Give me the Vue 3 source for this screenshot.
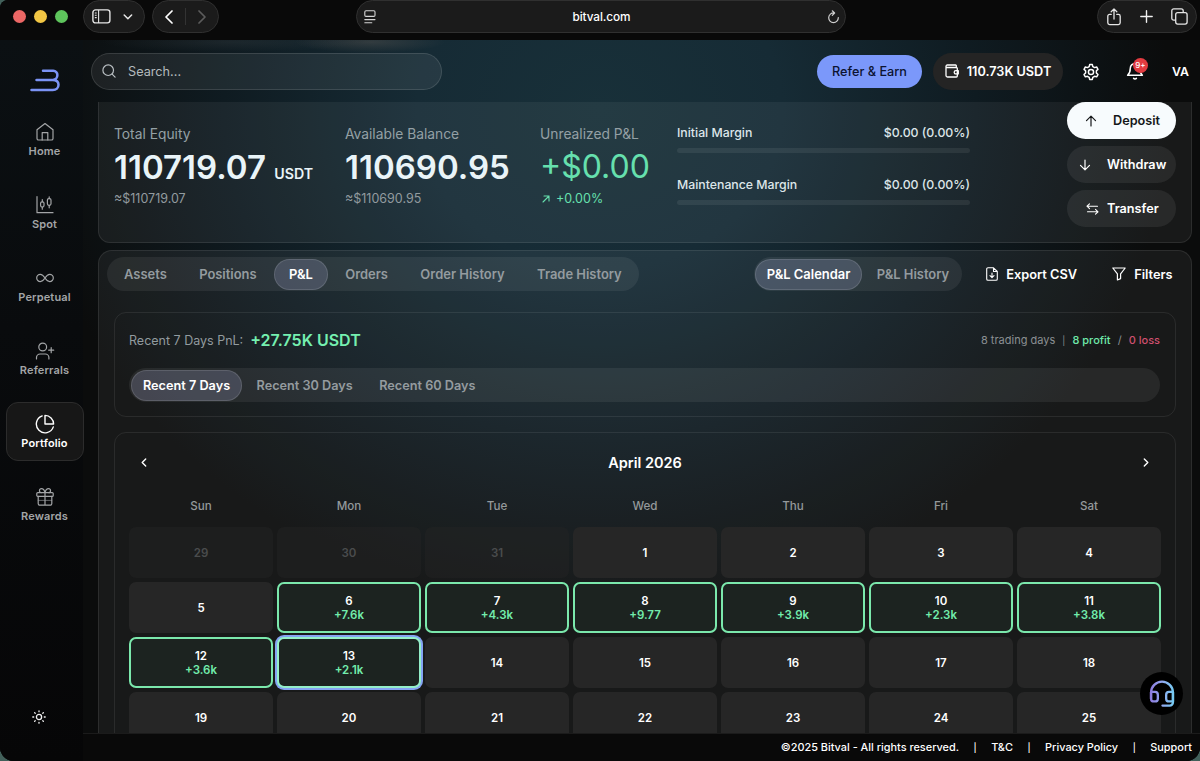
<script setup>
import { ref, computed } from 'vue'

const navItems = [
  { key: 'home', label: 'Home' },
  { key: 'spot', label: 'Spot' },
  { key: 'perpetual', label: 'Perpetual' },
  { key: 'referrals', label: 'Referrals' },
  { key: 'portfolio', label: 'Portfolio' },
  { key: 'rewards', label: 'Rewards' }
]
const activeNav = ref('portfolio')

const tabs = ['Assets', 'Positions', 'P&L', 'Orders', 'Order History', 'Trade History']
const activeTab = ref('P&L')

const views = ['P&L Calendar', 'P&L History']
const activeView = ref('P&L Calendar')

const ranges = ['Recent 7 Days', 'Recent 30 Days', 'Recent 60 Days']
const activeRange = ref('Recent 7 Days')

const weekdays = ['Sun', 'Mon', 'Tue', 'Wed', 'Thu', 'Fri', 'Sat']
const pnl = {
  6: '+7.6k',
  7: '+4.3k',
  8: '+9.77',
  9: '+3.9k',
  10: '+2.3k',
  11: '+3.8k',
  12: '+3.6k',
  13: '+2.1k'
}
const today = 13
const lastDay = 25

const days = computed(() => {
  const list = [29, 30, 31].map(n => ({ id: 'p' + n, n, muted: true }))
  for (let n = 1; n <= lastDay; n++) {
    list.push({ id: 'd' + n, n, pnl: pnl[n], today: n === today })
  }
  return list
})

const footerLinks = ['T&C', 'Privacy Policy', 'Support']
</script>

<template>
  <div class="window">
    <header class="chrome">
      <div class="lights">
        <i class="red"></i><i class="yellow"></i><i class="green"></i>
      </div>
      <div class="chrome-pill side-pill">
        <svg width="19" height="15" viewBox="0 0 19 15" fill="none" stroke="#e6e6e6" stroke-width="1.4">
          <rect x="0.9" y="0.9" width="17" height="13" rx="2.6" />
          <path d="M6.6 1v13M2.8 4h1.9M2.8 6.3h1.9M2.8 8.6h1.9" stroke-width="1.1" />
        </svg>
        <svg width="10" height="6" viewBox="0 0 10 6" fill="none" stroke="#e6e6e6" stroke-width="1.5" stroke-linecap="round" stroke-linejoin="round"><path d="M1.2 1l3.7 3.7L8.6 1" /></svg>
      </div>
      <div class="chrome-pill nav-pill">
        <svg width="8" height="14" viewBox="0 0 8 14" fill="none" stroke="#fff" stroke-width="1.7" stroke-linecap="round" stroke-linejoin="round"><path d="M7 1L1 7l6 6" /></svg>
        <span class="nav-sep"></span>
        <svg width="8" height="14" viewBox="0 0 8 14" fill="none" stroke="#5c5c5c" stroke-width="1.7" stroke-linecap="round" stroke-linejoin="round"><path d="M1 1l6 6-6 6" /></svg>
      </div>
      <div class="chrome-pill url-pill">
        <svg width="12" height="14" viewBox="0 0 12 14" fill="none" stroke="#d6d6d6" stroke-width="1.1" stroke-linecap="round"><rect x="0.8" y="0.8" width="10.2" height="5.6" rx="1.2" /><path d="M.8 9.6h10.2M.8 12.7h7" /></svg>
        <span class="url">bitval.com</span>
        <svg width="13" height="14" viewBox="0 0 13 14" fill="none" stroke="#cfcfcf" stroke-width="1.2" stroke-linecap="round" stroke-linejoin="round"><path d="M7 3a4.8 4.8 0 1 0 4.3 4.6M5.3.8L7.6 3 5.3 5.3" /></svg>
      </div>
      <div class="chrome-pill action-pill">
        <svg width="14" height="18" viewBox="0 0 14 18" fill="none" stroke="#e6e6e6" stroke-width="1.3" stroke-linecap="round" stroke-linejoin="round"><path d="M4.2 6.4H2.6A1.8 1.8 0 0 0 .8 8.2v6.6a1.8 1.8 0 0 0 1.8 1.8h8.800a1.800 1.800 0 0 0 1.800-1.800V8.200a1.800 1.800 0 0 0-1.800-1.800H9.800M7 11V1M4.200 3.700L7 .9l2.800 2.800" /></svg>
        <svg width="13" height="13" viewBox="0 0 13 13" stroke="#f0f0f0" stroke-width="1.4" stroke-linecap="round"><path d="M6.500.8v11.400M.8 6.500h11.400" /></svg>
        <svg width="17" height="17" viewBox="0 0 17 17" fill="none" stroke="#e6e6e6" stroke-width="1.3"><rect x="4.7" y="4.7" width="11.4" height="11.4" rx="2" /><path d="M4.700 12.200H2.800a2 2 0 0 1-2-2V2.800a2 2 0 0 1 2-2h7.400a2 2 0 0 1 2 2v1.900" /></svg>
      </div>
    </header>

    <div class="app">
      <aside class="sidebar">
        <svg class="logo" width="30" height="23" viewBox="0 0 30 23" fill="none" stroke="#7b93f5" stroke-width="2.5" stroke-linecap="round" stroke-linejoin="round">
          <path d="M13 1.800h10.300a4.100 4.100 0 0 1 4.100 4.300c0 2.900-2 4.800-4.600 4.800H6.500M22.800 10.900c3.400 0 5.700 1.800 5.700 4.900 0 3.200-2.300 5.200-5.700 5.200H1.500" />
        </svg>
        <nav class="nav">
          <button
            v-for="item in navItems"
            :key="item.key"
            type="button"
            class="nav-item"
            :class="{ active: activeNav === item.key }"
            @click="activeNav = item.key"
          >
            <svg width="20" height="20" viewBox="0 0 20 20" fill="none" stroke="currentColor" stroke-width="1.2" stroke-linecap="round" stroke-linejoin="round">
              <template v-if="item.key === 'home'">
                <path d="M2 7.800L10 1.500l8 6.300v8.600a1.600 1.600 0 0 1-1.600 1.600H3.600A1.600 1.600 0 0 1 2 16.400z" />
                <path d="M7.200 18v-7.400h5.600V18" />
              </template>
              <template v-else-if="item.key === 'spot'">
                <path d="M2 1.500V17.700h16M7.300 4.600v2.100M7.300 12.200v2M14.200 1.800v1.700M14.200 10.400v2.400" />
                <rect x="5.6" y="6.8" width="3.4" height="5.3" rx="1.5" />
                <rect x="12.4" y="3.6" width="3.6" height="6.7" rx="1.5" />
              </template>
              <path v-else-if="item.key === 'perpetual'" d="M10 10C8.500 7.800 7.300 6.400 5.300 6.400a3.600 3.600 0 0 0 0 7.200c2 0 3.200-1.400 4.700-3.600s2.700-3.600 4.700-3.600a3.600 3.600 0 0 1 0 7.200c-2 0-3.200-1.400-4.700-3.600z" />
              <template v-else-if="item.key === 'referrals'">
                <circle cx="7.7" cy="6" r="3.9" />
                <path d="M1.500 18v-1.400a3.600 3.600 0 0 1 3.600-3.600h5.200a3.600 3.600 0 0 1 3.600 3.600V18M16.200 6.700v5M13.700 9.200h5" />
              </template>
              <template v-else-if="item.key === 'portfolio'">
                <path d="M18.300 12.900A8.700 8.700 0 1 1 7.200 1.900" stroke-width="1.4" />
                <path d="M18.600 10A8.600 8.600 0 0 0 10 1.400V10z" stroke-width="1.4" />
              </template>
              <template v-else>
                <rect x="1.8" y="5.6" width="16.4" height="3.8" rx="1" />
                <path d="M3.200 9.400v7.200A1.600 1.600 0 0 0 4.800 18.200h10.400a1.600 1.600 0 0 0 1.600-1.600V9.400M10 5.600v12.600M10 5.600S9 1.700 6.400 1.700a1.950 1.950 0 0 0 0 3.900M10 5.600s1-3.900 3.600-3.900a1.950 1.950 0 0 1 0 3.900" />
                <path d="M3.200 13.400h13.600" stroke-width="0.6" />
              </template>
            </svg>
            <span>{{ item.label }}</span>
          </button>
        </nav>
        <svg class="theme" width="14" height="14" viewBox="0 0 14 14" fill="none" stroke="#f2f2f2" stroke-width="1.3" stroke-linecap="round">
          <circle cx="7" cy="7" r="2.6" />
          <path d="M7 .8v.9M7 12.300v.9M.8 7h.9M12.300 7h.9M2.600 2.600l.6.6M10.800 10.800l.6.6M2.600 11.400l.6-.6M10.800 3.200l.6-.6" />
        </svg>
      </aside>

      <div class="page">
        <div class="topbar">
          <div class="search">
            <svg width="14" height="14" viewBox="0 0 14 14" fill="none" stroke="#b8bec2" stroke-width="1.2" stroke-linecap="round"><circle cx="6.2" cy="6.2" r="5.3" /><path d="M10.100 10.100l3 3" /></svg>
            <span>Search...</span>
          </div>
          <button type="button" class="refer">Refer &amp; Earn</button>
          <button type="button" class="wallet">
            <svg width="14" height="14" viewBox="0 0 14 14" fill="none" stroke="#fff" stroke-width="1.3" stroke-linejoin="round"><path d="M11.300 3.500V1.700a.7.700 0 0 0-.7-.7H2.300A1.300 1.300 0 0 0 1 2.300v9.200A1.500 1.500 0 0 0 2.500 13h8.800a1 1 0 0 0 1-1V4.500a1 1 0 0 0-1-1h-9A1.200 1.200 0 0 1 1 2.300M13.300 6.700h-2.500a1.600 1.600 0 0 0 0 3.200h2.500z" /></svg>
            110.73K USDT
          </button>
          <svg class="gear" width="18" height="18" viewBox="0.5 -0.5 23 23" fill="none" stroke="#fff" stroke-width="1.9" stroke-linejoin="round">
            <path d="M9.700 4.100L10.300 1.500h3.400l.6 2.600 2.300 1.300 2.600-.8 1.700 3-2 1.900v2.800l2 2-1.700 2.900-2.600-.7-2.300 1.300-.6 2.700h-3.400l-.6-2.700-2.300-1.300-2.600.7-1.700-2.900 2-2V9.500l-2-1.900 1.700-3 2.600.8z" />
            <circle cx="12" cy="11" r="3.3" />
          </svg>
          <div class="bell">
            <svg width="18" height="18" viewBox="0 0 18 18" fill="none" stroke="#fff" stroke-width="1.5" stroke-linecap="round" stroke-linejoin="round"><path d="M9 1.500a4.700 4.700 0 0 0-4.700 4.700c0 4.500-1.300 5.700-2.700 7h14.800c-1.400-1.300-2.700-2.500-2.700-7A4.700 4.700 0 0 0 9 1.500zM7.600 16.300a1.700 1.700 0 0 0 2.800 0" /></svg>
            <span class="badge">9+</span>
          </div>
          <span class="user">VA</span>
        </div>

        <main class="content">
          <section class="panel summary">
            <div class="stat equity">
              <span class="stat-label">Total Equity</span>
              <div class="stat-value">110719.07 <small>USDT</small></div>
              <span class="stat-sub">≈$110719.07</span>
            </div>
            <div class="stat balance">
              <span class="stat-label">Available Balance</span>
              <div class="stat-value">110690.95</div>
              <span class="stat-sub">≈$110690.95</span>
            </div>
            <div class="stat unrealized">
              <span class="stat-label">Unrealized P&amp;L</span>
              <div class="stat-value gain">+$0.00</div>
              <span class="stat-sub gain">
                <svg width="8" height="8" viewBox="0 0 8 8" fill="none" stroke="currentColor" stroke-width="1.1" stroke-linecap="round" stroke-linejoin="round"><path d="M1 7l6-6M2 1h5v5" /></svg>
                +0.00%
              </span>
            </div>
            <div class="margins">
              <div class="margin">
                <div class="margin-row"><span>Initial Margin</span><span>$0.00 (0.00%)</span></div>
                <div class="track"></div>
              </div>
              <div class="margin">
                <div class="margin-row"><span>Maintenance Margin</span><span>$0.00 (0.00%)</span></div>
                <div class="track"></div>
              </div>
            </div>
            <div class="actions">
              <button type="button" class="action primary">
                <svg width="12" height="12" viewBox="0 0 12 12" fill="none" stroke="currentColor" stroke-width="1.2" stroke-linecap="round" stroke-linejoin="round"><path d="M6 11V1.300M1.500 5.700L6 1.200l4.500 4.500" /></svg>
                <span>Deposit</span>
              </button>
              <button type="button" class="action withdraw">
                <svg width="12" height="12" viewBox="0 0 12 12" fill="none" stroke="currentColor" stroke-width="1.2" stroke-linecap="round" stroke-linejoin="round"><path d="M6 1v9.700M1.500 6.300L6 10.800l4.500-4.500" /></svg>
                <span>Withdraw</span>
              </button>
              <button type="button" class="action transfer">
                <svg width="13" height="12" viewBox="0 0 13 12" fill="none" stroke="currentColor" stroke-width="1.1" stroke-linecap="round" stroke-linejoin="round"><path d="M11.500 3.200H1M3.500.8L1 3.200l2.500 2.400M1.500 8.800H12M9.500 6.400L12 8.800l-2.500 2.400" /></svg>
                <span>Transfer</span>
              </button>
            </div>
          </section>

          <section class="panel detail">
            <div class="toolbar">
              <div class="tabs">
                <button
                  v-for="tab in tabs"
                  :key="tab"
                  type="button"
                  class="tab"
                  :class="{ active: activeTab === tab }"
                  @click="activeTab = tab"
                >{{ tab }}</button>
              </div>
              <div class="tabs views">
                <button
                  v-for="view in views"
                  :key="view"
                  type="button"
                  class="tab"
                  :class="{ active: activeView === view }"
                  @click="activeView = view"
                >{{ view }}</button>
              </div>
              <button type="button" class="tool">
                <svg width="12" height="14" viewBox="0 0 12 14" fill="none" stroke="#fff" stroke-width="1.1" stroke-linecap="round" stroke-linejoin="round"><path d="M7.500.8H2A1.300 1.300 0 0 0 .7 2.100v9.800A1.300 1.300 0 0 0 2 13.200h8a1.300 1.300 0 0 0 1.300-1.300V4.500zM7.500.8v3.700h3.800M6 6v4.500M4 8.700l2 1.900 2-1.900" /></svg>
                Export CSV
              </button>
              <button type="button" class="tool filters">
                <svg width="14" height="14" viewBox="0 0 14 14" fill="none" stroke="#fff" stroke-width="1.2" stroke-linejoin="round"><path d="M.8 1h12.400L8.600 6.800v4.800L5.400 13V6.800z" /></svg>
                Filters
              </button>
            </div>

            <div class="card recent">
              <div class="recent-head">
                <span class="recent-label">Recent 7 Days PnL:</span>
                <strong>+27.75K USDT</strong>
                <span class="recent-stats">8 trading days <i class="bar">|</i> <b class="profit">8 profit</b> <i>/</i> <b class="loss">0 loss</b></span>
              </div>
              <div class="tabs ranges">
                <button
                  v-for="range in ranges"
                  :key="range"
                  type="button"
                  class="tab"
                  :class="{ active: activeRange === range }"
                  @click="activeRange = range"
                >{{ range }}</button>
              </div>
            </div>

            <div class="card calendar">
              <div class="month">
                <svg width="6" height="9" viewBox="0 0 6 9" fill="none" stroke="#fff" stroke-width="1.4" stroke-linecap="round" stroke-linejoin="round"><path d="M4.700 1L1.200 4.500 4.700 8" /></svg>
                <h3>April 2026</h3>
                <svg width="6" height="9" viewBox="0 0 6 9" fill="none" stroke="#fff" stroke-width="1.4" stroke-linecap="round" stroke-linejoin="round"><path d="M1.300 1l3.500 3.500L1.300 8" /></svg>
              </div>
              <div class="grid weekdays">
                <span v-for="day in weekdays" :key="day">{{ day }}</span>
              </div>
              <div class="grid">
                <div
                  v-for="day in days"
                  :key="day.id"
                  class="day"
                  :class="{ muted: day.muted, win: day.pnl, today: day.today }"
                >
                  <span>{{ day.n }}</span>
                  <span v-if="day.pnl" class="day-pnl">{{ day.pnl }}</span>
                </div>
              </div>
            </div>
          </section>
        </main>

        <footer class="footer">
          <span>©2025 Bitval - All rights reserved.</span>
          <template v-for="link in footerLinks" :key="link">
            <i class="bar">|</i>
            <span>{{ link }}</span>
          </template>
        </footer>
      </div>
    </div>

    <button type="button" class="support" aria-label="Support">
      <svg width="26" height="28" viewBox="0 0 28 30" fill="none" stroke="url(#support-stroke)" stroke-width="2.5" stroke-linecap="round" stroke-linejoin="round">
        <defs>
          <linearGradient id="support-stroke" gradientUnits="userSpaceOnUse" x1="1" y1="0" x2="27" y2="0">
            <stop offset="0" stop-color="#8c78dc" />
            <stop offset="0.5" stop-color="#93a8f0" />
            <stop offset="1" stop-color="#74ccf2" />
          </linearGradient>
        </defs>
        <path d="M2.200 20v-6.500a11.800 11.800 0 0 1 23.600 0V24a3.500 3.500 0 0 1-3.500 3.500H14.500" />
        <path d="M2.200 12.800H6.500a3 3 0 0 1 3 3v4.200a3 3 0 0 1-3 3H5.200a3 3 0 0 1-3-3zM25.800 12.800H21.500a3 3 0 0 0-3 3v4.200a3 3 0 0 0 3 3h4.300z" />
      </svg>
    </button>
  </div>
</template>

<style>
html,
body {
  background: #42605a;
  overflow: hidden;
}
</style>

<style scoped>
.window {
  position: relative;
  display: flex;
  flex-direction: column;
  width: 1200px;
  height: 761px;
  overflow: hidden;
  border-radius: 8px 0 14px 14px;
  background: #0a0a0a;
  color: #fff;
  font-family: Inter, 'Noto Sans', sans-serif;
}

button {
  border: 0;
  padding: 0;
  margin: 0;
  background: none;
  color: inherit;
  font: inherit;
  white-space: nowrap;
}

svg {
  flex: none;
}

i {
  font-style: normal;
}

/* browser bar */
.chrome {
  display: flex;
  flex: none;
  height: 40px;
  background: #090909;
}

.lights {
  display: flex;
  gap: 8px;
  width: 83px;
  padding: 10px 0 0 13px;
  box-sizing: border-box;
}

.lights i {
  width: 13px;
  height: 13px;
  border-radius: 50%;
}

.red { background: #ec6765; }
.yellow { background: #f2c644; }
.green { background: #5ec45c; }

.chrome-pill {
  display: flex;
  align-items: center;
  box-sizing: border-box;
  height: 33px;
  border: 1px solid #303030;
  border-radius: 17px;
  background: #1b1b1b;
}

.side-pill {
  width: 62px;
  padding: 0 11px 0 8px;
  justify-content: space-between;
}

.nav-pill {
  width: 67px;
  margin-left: 7px;
  padding: 0 12px;
  justify-content: space-between;
}

.nav-sep {
  width: 1px;
  height: 17px;
  background: #333;
}

.url-pill {
  width: 490px;
  margin-left: 137px;
  padding: 0 5px 0 7px;
}

.url {
  flex: 1;
  text-align: center;
  font-size: 11.8px;
  font-weight: 500;
  letter-spacing: -0.1px;
}

.action-pill {
  width: 100px;
  margin-left: 251px;
  padding: 0 8px 0 9px;
  justify-content: space-between;
}

/* shell */
.app {
  display: flex;
  height: 721px;
  background:
    radial-gradient(ellipse 75px 11px at 370px 2px, rgba(130, 115, 105, 0.28), transparent),
    radial-gradient(ellipse 130px 10px at 230px 2px, rgba(110, 110, 110, 0.14), transparent),
    radial-gradient(ellipse 570px 500px at 600px 70px, #183039 0%, #162b35 32%, #0f1b21 66%, #0b0c0c 100%);
}

.sidebar {
  display: flex;
  flex-direction: column;
  align-items: center;
  flex: none;
  box-sizing: border-box;
  width: 83px;
  padding: 29px 0 0 6px;
  background: linear-gradient(#0b1013 0%, #090b0d 40%, #060607 100%);
}

.logo {
  margin-left: 1px;
}

.nav {
  display: flex;
  flex-direction: column;
  gap: 14px;
  margin-top: 18px;
}

.nav-item {
  display: flex;
  flex-direction: column;
  align-items: center;
  gap: 2px;
  box-sizing: border-box;
  width: 78px;
  height: 59px;
  padding-top: 11px;
  border: 1px solid transparent;
  border-radius: 12px;
  color: #a3a5a7;
  font-size: 11px;
  font-weight: 600;
  line-height: 14px;
  letter-spacing: 0.15px;
}

.nav-item.active {
  border-color: #2c2c2c;
  background: #171717;
  color: #fff;
}

.theme {
  margin: auto 11px 37px 0;
}

.page {
  display: flex;
  flex-direction: column;
  width: 1117px;
}

.topbar {
  display: flex;
  align-items: center;
  flex: none;
  height: 62px;
  padding-left: 8px;
}

.search {
  display: flex;
  align-items: center;
  gap: 12px;
  box-sizing: border-box;
  width: 351px;
  height: 37px;
  padding-left: 10px;
  border: 1px solid rgba(255, 255, 255, 0.12);
  border-radius: 19px;
  background: rgba(255, 255, 255, 0.07);
  color: #b4babd;
  font-size: 12.7px;
}

.refer {
  width: 105px;
  height: 33px;
  margin-left: 375px;
  border-radius: 17px;
  background: #7b98fa;
  color: #0c1330;
  font-size: 12.7px;
  font-weight: 500;
}

.wallet {
  display: flex;
  align-items: center;
  justify-content: center;
  gap: 8px;
  width: 130px;
  height: 37px;
  margin-left: 11px;
  border-radius: 19px;
  background: #242424;
  font-size: 12.7px;
  font-weight: 600;
}

.gear {
  margin: 2px 0 0 19px;
}

.bell {
  position: relative;
  height: 18px;
  margin-left: 26px;
}

.badge {
  position: absolute;
  top: -4px;
  left: 7px;
  width: 15px;
  height: 15px;
  border-radius: 50%;
  background: #e23b40;
  font-size: 8px;
  font-weight: 500;
  line-height: 15px;
  text-align: center;
}

.user {
  margin-left: 28px;
  font-size: 12.3px;
  font-weight: 600;
}

.content {
  height: 631px;
  padding: 0 8px 0 15px;
  overflow: hidden;
}

.panel {
  box-sizing: border-box;
  border: 1px solid rgba(255, 255, 255, 0.09);
  background: rgba(255, 255, 255, 0.055);
}

.summary {
  display: flex;
  height: 141px;
  padding: 0 15px;
  border-top: 0;
  border-radius: 0 0 12px 12px;
}

.stat {
  display: flex;
  flex-direction: column;
  flex: none;
  padding-top: 23px;
}

.equity { width: 231px; }
.balance { width: 195px; }
.unrealized { width: 137px; }

.stat-label {
  color: #94a0a5;
  font-size: 13.8px;
  line-height: 18px;
}

.stat-value {
  height: 40px;
  margin-top: 4px;
  color: #e9f4f8;
  font-size: 33px;
  font-weight: 600;
  line-height: 40px;
  white-space: nowrap;
}

.stat-value small {
  font-size: 14.2px;
  font-weight: 600;
}

.stat-sub {
  margin-top: 3px;
  color: #929b9f;
  font-size: 12.5px;
  line-height: 18px;
}

.stat-value.gain {
  color: #66e0ae;
  font-size: 32px;
  font-weight: 400;
}

.stat-sub.gain {
  display: flex;
  align-items: center;
  gap: 6px;
  padding-left: 2px;
  color: #66e0ae;
}

.margins {
  display: flex;
  flex-direction: column;
  gap: 26px;
  width: 293px;
  padding-top: 22px;
}

.margin-row {
  display: flex;
  justify-content: space-between;
  height: 18px;
  color: #dde6e9;
  font-size: 12.3px;
  font-weight: 500;
  line-height: 18px;
}

.track {
  height: 5px;
  margin-top: 6px;
  border-radius: 3px;
  background: rgba(255, 255, 255, 0.07);
}

.margins .margin {
  height: 26px;
}

.actions {
  display: flex;
  flex-direction: column;
  gap: 7px;
  width: 109px;
  margin-left: auto;
}

.action {
  display: flex;
  align-items: center;
  flex: none;
  box-sizing: border-box;
  height: 37px;
  padding-left: 18px;
  border-radius: 19px;
  background: rgba(255, 255, 255, 0.07);
  font-size: 12.7px;
  font-weight: 600;
}

.action.primary {
  gap: 16px;
  background: #f7fbfd;
  color: #151719;
}

.action.withdraw {
  gap: 16px;
  padding-left: 12px;
}

.action.transfer {
  gap: 8px;
  padding-left: 19px;
}

/* P&L details */
.detail {
  height: 560px;
  margin-top: 7px;
  padding: 6px 15px 0;
  border-radius: 14px 14px 0 0;
}

.toolbar {
  display: flex;
  align-items: center;
  margin: 0 -6px 21px -7px;
}

.tabs {
  display: flex;
  align-items: center;
  gap: 2.4px;
  box-sizing: border-box;
  height: 34px;
  padding: 0 2px;
  border-radius: 17px;
  background: rgba(255, 255, 255, 0.065);
}

.tab {
  box-sizing: border-box;
  height: 31px;
  padding: 0 14px;
  border: 1px solid transparent;
  border-radius: 16px;
  color: #949b9f;
  font-size: 12.95px;
  font-weight: 600;
}

.tab.active {
  border-color: rgba(255, 255, 255, 0.13);
  background: rgba(148, 153, 188, 0.27);
  color: #fff;
}

.views {
  margin-left: 115px;
  padding: 0 1px;
}

.views .tab {
  padding: 0 11px;
}

.tool {
  display: flex;
  align-items: center;
  gap: 8px;
  margin-left: 24px;
  font-size: 12.8px;
  font-weight: 600;
}

.tool.filters {
  margin-left: 35px;
}

.card {
  box-sizing: border-box;
  border: 1px solid rgba(255, 255, 255, 0.08);
  border-radius: 12px;
}

.recent {
  height: 105px;
  padding: 16px 15px 0 14px;
}

.recent-head {
  display: flex;
  align-items: center;
  height: 22px;
}

.recent-label {
  color: #929b9f;
  font-size: 12.5px;
}

.recent-head strong {
  margin-left: 7px;
  color: #75f0b0;
  font-size: 16px;
  font-weight: 600;
}

.recent-stats {
  margin-left: auto;
  color: #8b9093;
  font-size: 11px;
}

.recent-stats i {
  margin: 0 4px;
}

.bar {
  font-size: 9px;
}

.recent-stats b {
  font-weight: 500;
}

.profit { color: #6fe9aa; }
.loss { color: #d0506f; }

.ranges {
  margin-top: 17px;
}

.ranges .tab {
  padding: 0 11px;
  font-size: 12.7px;
}

.calendar {
  height: 400px;
  margin-top: 15px;
  padding: 14px 14px 0;
}

.month {
  display: flex;
  align-items: center;
  justify-content: space-between;
  height: 30px;
  padding: 0 12px;
}

.month h3 {
  margin: 0;
  font-size: 14.5px;
  font-weight: 600;
}

.grid {
  display: grid;
  grid-template-columns: repeat(7, 1fr);
  grid-auto-rows: 51px;
  gap: 4px;
}

.weekdays {
  grid-auto-rows: 18px;
  margin: 20px 0 12px;
  color: #94999b;
  font-size: 11.6px;
  font-weight: 500;
  line-height: 18px;
  text-align: center;
}

.day {
  display: flex;
  flex-direction: column;
  align-items: center;
  justify-content: center;
  box-sizing: border-box;
  border-radius: 7px;
  background: #262626;
  font-size: 11.5px;
  font-weight: 600;
  line-height: 14px;
}

.day.muted {
  background: rgba(38, 38, 38, 0.4);
  color: #4a4c4d;
}

.day.win {
  border: 2px solid #7be8ac;
  background: #1c2320;
}

.day.today {
  border-color: #93efc8;
  box-shadow: 0 0 0 2px #84a3f2;
}

.day-pnl {
  color: #72ecac;
}

.footer {
  display: flex;
  align-items: center;
  justify-content: flex-end;
  gap: 14.5px;
  flex: none;
  box-sizing: border-box;
  height: 28px;
  padding: 0 8px 1px 0;
  border-top: 1px solid #1b1b1b;
  background: #090909;
  font-size: 10.9px;
  font-weight: 500;
}

.support {
  position: absolute;
  right: 17px;
  bottom: 46px;
  display: flex;
  align-items: center;
  justify-content: center;
  width: 43px;
  height: 43px;
  border-radius: 50%;
  background: #000;
}
</style>
